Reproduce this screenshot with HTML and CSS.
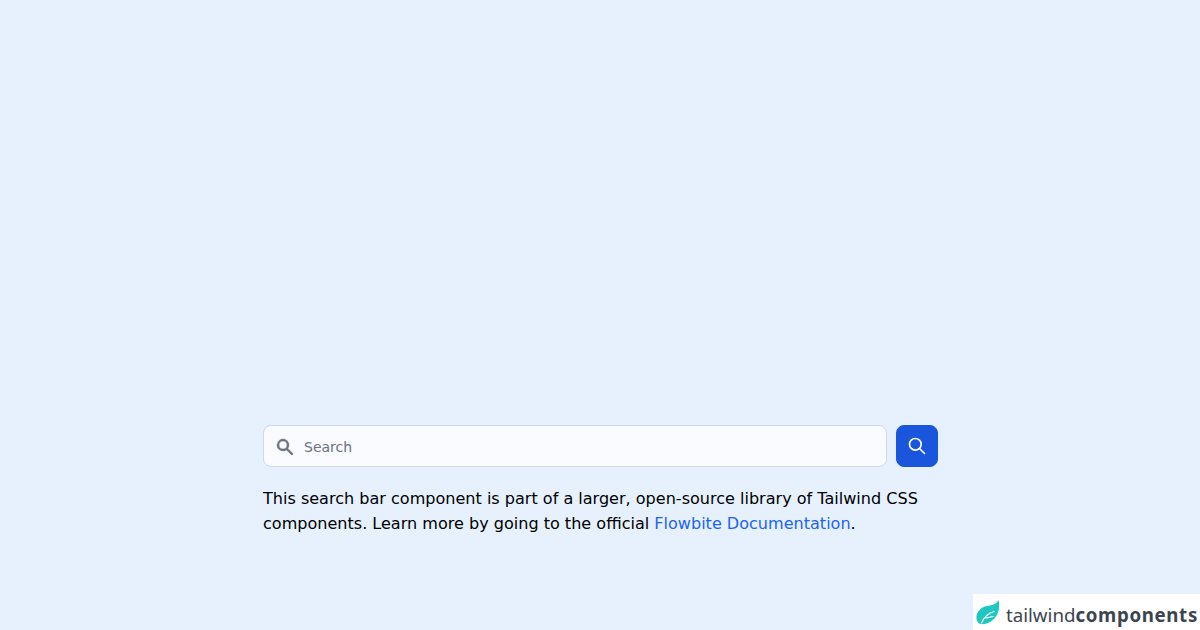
FILE: index.html
```html
<!DOCTYPE html>
<html lang="en">
<head>
<meta charset="utf-8">
<title>Search bar</title>
<link rel="stylesheet" href="styles.css">
</head>
<body>
<main class="content">
  <form class="search">
    <label class="field">
      <svg class="field-icon" viewBox="0 0 20 20" width="20" height="20" aria-hidden="true"><path fill-rule="evenodd" clip-rule="evenodd" d="M8 4a4 4 0 100 8 4 4 0 000-8zM2 8a6 6 0 1110.89 3.476l4.817 4.817a1 1 0 01-1.414 1.414l-4.816-4.816A6 6 0 012 8z"/></svg>
      <span class="placeholder">Search</span>
    </label>
    <button class="button" type="button" aria-label="Search">
      <svg viewBox="0 0 24 24" width="20" height="20" fill="none" stroke="currentColor" stroke-width="2" stroke-linecap="round" stroke-linejoin="round" aria-hidden="true"><path d="M21 21l-6-6m2-5a7 7 0 11-14 0 7 7 0 0114 0z"/></svg>
    </button>
  </form>
  <p class="note">This search bar component is part of a larger, open-source library of Tailwind CSS components. Learn more by going to the official <a class="link" href="#">Flowbite Documentation</a>.</p>
</main>
<aside class="badge">
  <svg class="leaf" viewBox="0 0 24 25" width="24" height="25" aria-hidden="true">
    <path fill="#1fc7c1" d="M22.500 0C24 7 23 14 18 19 14 23 8 25.500 3 23.500 0 21.500-.5 16 2 12 5 7.500 9 6 14 5.500 18 5 21 3 22.500 0z"/>
    <path fill="none" stroke="#fff" stroke-width="1.200" stroke-linecap="round" d="M5.500 23C8 17 13 13 18 11.500M9 18c2.500-.5 5-.5 8-1.500"/>
  </svg>
  <span class="brand">tailwind<b class="brand-strong">components</b></span>
</aside>
</body>
</html>
```
FILE: styles.css
```css
html, body {
  margin: 0;
  height: 100%;
}
body {
  background: #e6f1fd;
  font-family: "DejaVu Sans", sans-serif;
  overflow: hidden;
}
.content {
  box-sizing: border-box;
  width: 674.5px;
  margin-left: 263px;
  padding-top: 425px;
}
.search {
  display: flex;
  align-items: stretch;
  gap: 9px;
  height: 42px;
}
.field {
  flex: 1;
  display: flex;
  align-items: center;
  gap: 9px;
  box-sizing: border-box;
  padding: 1px 0 0 11px;
  background: #f9fbfe;
  border: 1px solid #d1d8e8;
  border-radius: 8px;
}
.field-icon {
  fill: #6b7280;
  stroke: #6b7280;
  stroke-width: 0.4;
  flex: none;
}
.placeholder {
  font-size: 14px;
  color: #6b7280;
}
.button {
  width: 42px;
  padding: 0;
  display: flex;
  align-items: center;
  justify-content: center;
  color: #fff;
  background: #1a56db;
  border: 1px solid #1a56db;
  border-radius: 8px;
}
.note {
  margin: 20.3px 0 0;
  font-size: 16.06px;
  line-height: 24.4px;
  color: #000;
}
.link {
  color: #1c64f2;
  text-decoration: none;
}
.badge {
  position: absolute;
  right: 0;
  bottom: 0;
  width: 227px;
  height: 36px;
  box-sizing: border-box;
  padding-left: 3px;
  display: flex;
  align-items: center;
  gap: 6px;
  background: #fff;
}
.leaf {
  flex: none;
}
.brand {
  padding-top: 4px;
  font-family: "Noto Sans", sans-serif;
  font-size: 18.7px;
  color: #3d4451;
  white-space: nowrap;
}
.brand-strong {
  font-weight: 700;
  letter-spacing: 0.65px;
}
```
